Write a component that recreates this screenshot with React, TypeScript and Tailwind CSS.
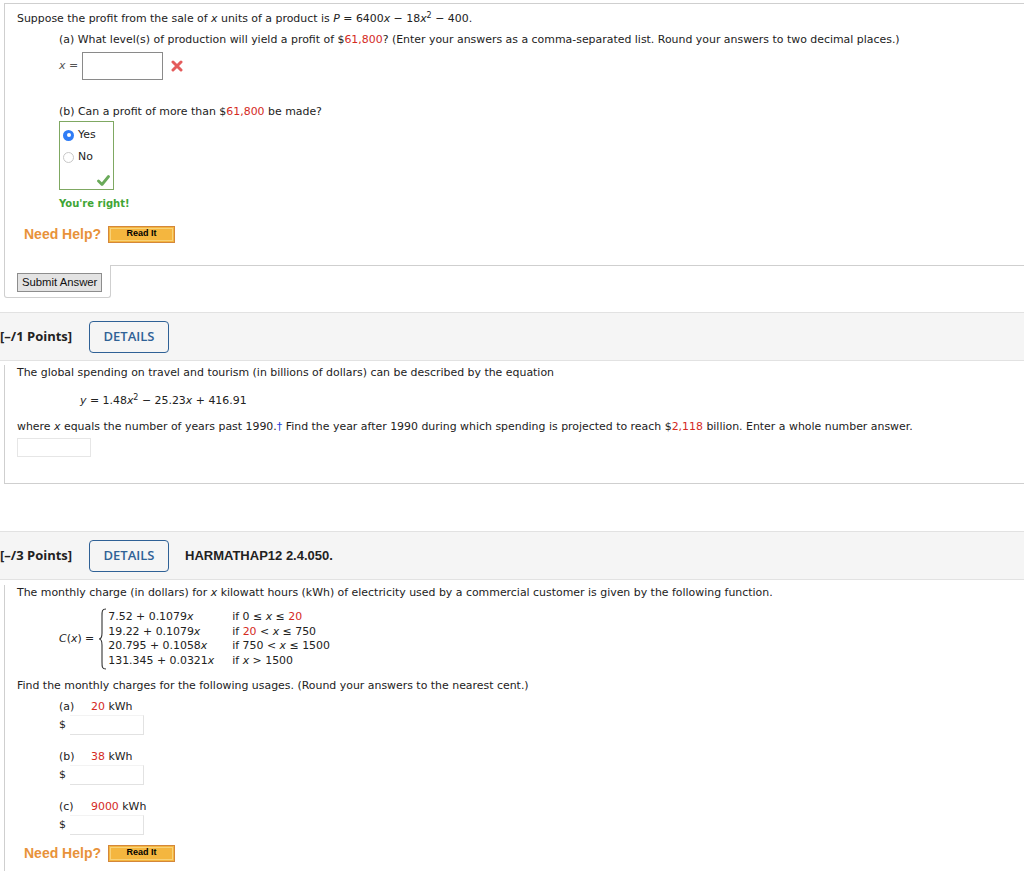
import React from "react";

const red = "text-[#d42a1e]";

function NeedHelp() {
  return (
    <div className="flex items-center h-[18px] pl-[19px]">
      <span className="text-[#e8923a] font-bold text-[14px]" style={{ fontFamily: "'Liberation Sans', Arial, sans-serif" }}>
        Need Help?
      </span>
      <span className="ml-[7px] h-[17px] w-[67px] border border-[#d4873a] bg-[#f4b63f] flex items-center justify-center p-[1px]">
        <span className="w-full h-full border border-[#f8d27a] flex items-center justify-center text-[9px] font-bold text-black" style={{ fontFamily: "'Liberation Sans', Arial, sans-serif" }}>
          Read It
        </span>
      </span>
    </div>
  );
}

function Header({ pts, title }: { pts: string; title?: string }) {
  return (
    <div className="h-[49px] bg-[#f5f5f5] border-t border-b border-[#e2e2e2] flex items-center" style={{ fontFamily: "'Open Sans', sans-serif" }}>
      <span className="text-[13px] font-bold text-[#222] w-[89px]">{pts}</span>
      <span className="h-[32px] w-[80px] border-[1.5px] border-[#2f6196] rounded-[4px] flex items-center justify-center text-[13px] font-semibold text-[#2f6196]">
        DETAILS
      </span>
      {title && (
        <span className="ml-[16px] text-[13px] font-bold text-[#222]" style={{ fontFamily: "'Liberation Sans', Arial, sans-serif" }}>{title}</span>
      )}
    </div>
  );
}

function Radio({ checked }: { checked?: boolean }) {
  return checked ? (
    <span className="w-[11px] h-[11px] rounded-full bg-[#2f7cf6] flex items-center justify-center">
      <span className="w-[4px] h-[4px] rounded-full bg-white" />
    </span>
  ) : (
    <span className="w-[11px] h-[11px] rounded-full border border-[#c8c8c8] bg-white" />
  );
}

function Brace() {
  return (
    <svg width="9" height="62" viewBox="0 0 9 62" className="mr-[1px]">
      <path d="M8 1 C4 1 4 3 4 8 L4 25 C4 29 3 31 1 31 C3 31 4 33 4 37 L4 54 C4 59 4 61 8 61" fill="none" stroke="#333" strokeWidth="1.1" />
    </svg>
  );
}

function Usage({ label, amount }: { label: string; amount: string }) {
  return (
    <div className="pl-[42px]">
      <div className="h-[16px] leading-[16px] flex">
        <span className="w-[32px]">{label}</span>
        <span><span className={red}>{amount}</span> kWh</span>
      </div>
      <div className="flex items-center h-[20px]">
        <span className="w-[11px]">$</span>
        <span className="w-[74px] h-[20px] border-b border-r border-[#e2e2e2] border-t border-t-[#f3f3f3]" />
      </div>
    </div>
  );
}

export default function App() {
  return (
    <div className="w-[1024px] h-[871px] overflow-hidden bg-white text-[10.93px] text-[#222]" style={{ fontFamily: "'DejaVu Sans', Verdana, sans-serif" }}>
      {/* Section 1 */}
      <div className="pt-[3px]">
        <div className="ml-[4px] border-t border-l border-[#cfcfcf] pl-[12px] pb-[22px]">
          <p className="mt-[7px] h-[16px] leading-[16px]">
            Suppose the profit from the sale of <i>x</i> units of a product is <i>P</i> = 6400<i>x</i> − 18<i>x</i>
            <sup className="text-[8px]">2</sup> − 400.
          </p>
          <div className="pl-[42px]">
            <p className="mt-[5px] h-[16px] leading-[16px]">
              (a) What level(s) of production will yield a profit of $<span className={red}>61,800</span>? (Enter your answers as a comma-separated list. Round your answers to two decimal places.)
            </p>
            <div className="mt-[4px] flex items-center h-[28px]">
              <span className="w-[23px] text-[#555]"><i>x</i> =</span>
              <span className="w-[81px] h-[28px] border border-[#8a8a8a]" />
              <svg width="12" height="12" viewBox="0 0 12 12" className="ml-[8px]">
                <path d="M2 2 L10 10 M10 2 L2 10" stroke="#e45c5c" strokeWidth="3" strokeLinecap="round" />
              </svg>
            </div>
            <p className="mt-[24px] h-[16px] leading-[16px]">
              (b) Can a profit of more than $<span className={red}>61,800</span> be made?
            </p>
            <div className="mt-[1px] w-[55px] h-[69px] border border-[#7fa862] relative">
              <div className="flex items-center h-[16px] mt-[5px] pl-[3px]">
                <Radio checked />
                <span className="ml-[4px]">Yes</span>
              </div>
              <div className="flex items-center h-[16px] mt-[6px] pl-[3px]">
                <Radio />
                <span className="ml-[4px]">No</span>
              </div>
              <svg width="13" height="11" viewBox="0 0 13 11" className="absolute right-[3px] bottom-[3px]">
                <path d="M1.5 6 L5 9.5 L11.5 1.5" fill="none" stroke="#6aaa5a" strokeWidth="2.8" strokeLinecap="round" strokeLinejoin="round" />
              </svg>
            </div>
            <p className="mt-[6px] h-[16px] leading-[16px] text-[10px] font-bold text-[#3fa535]">You're right!</p>
          </div>
          <div className="mt-[13px] -ml-[12px]">
            <NeedHelp />
          </div>
        </div>
        <div className="ml-[4px] flex">
          <div className="w-[107px] h-[33px] border-l border-r border-b border-[#cfcfcf] rounded-b-[3px] pl-[12px] pt-[8px]">
            <span className="inline-flex items-center h-[19px] px-[4px] bg-[#e3e3e3] border border-[#8d8d8d] text-[11.3px] text-[#111]" style={{ fontFamily: "'Liberation Sans', Arial, sans-serif" }}>
              Submit Answer
            </span>
          </div>
          <div className="flex-1 border-t border-[#cfcfcf]" />
        </div>
      </div>

      {/* Section 2 */}
      <div className="mt-[14px]">
        <Header pts="[–/1 Points]" />
        <div className="ml-[4px] border-l border-b border-[#cfcfcf] h-[119px] pl-[12px]">
          <p className="mt-[4px] h-[16px] leading-[16px]">
            The global spending on travel and tourism (in billions of dollars) can be described by the equation
          </p>
          <p className="mt-[12px] h-[16px] leading-[16px] pl-[63px]">
            <i>y</i> = 1.48<i>x</i><sup className="text-[8px]">2</sup> − 25.23<i>x</i> + 416.91
          </p>
          <p className="mt-[10px] h-[16px] leading-[16px]">
            where <i>x</i> equals the number of years past 1990.<span className="text-[#1f3fd8]">†</span> Find the year after 1990 during which spending is projected to reach $<span className={red}>2,118</span> billion. Enter a whole number answer.
          </p>
          <div className="mt-[3px] w-[74px] h-[19px] border border-[#e6e6e6]" />
        </div>
      </div>

      {/* Section 3 */}
      <div className="mt-[47px]">
        <Header pts="[–/3 Points]" title="HARMATHAP12 2.4.050." />
        <div className="ml-[4px] border-l border-[#cfcfcf] h-[300px] pl-[12px]">
          <p className="mt-[5px] h-[16px] leading-[16px]">
            The monthly charge (in dollars) for <i>x</i> kilowatt hours (kWh) of electricity used by a commercial customer is given by the following function.
          </p>
          <div className="mt-[7px] flex items-center pl-[42px]">
            <span className="mr-[4px]"><i>C</i>(<i>x</i>) =</span>
            <Brace />
            <div className="leading-[14.5px]">
              <div className="flex"><span className="w-[124px]">7.52 + 0.1079<i>x</i></span><span>if 0 ≤ <i>x</i> ≤ <span className={red}>20</span></span></div>
              <div className="flex"><span className="w-[124px]">19.22 + 0.1079<i>x</i></span><span>if <span className={red}>20</span> &lt; <i>x</i> ≤ 750</span></div>
              <div className="flex"><span className="w-[124px]">20.795 + 0.1058<i>x</i></span><span>if 750 &lt; <i>x</i> ≤ 1500</span></div>
              <div className="flex"><span className="w-[124px]">131.345 + 0.0321<i>x</i></span><span>if <i>x</i> &gt; 1500</span></div>
            </div>
          </div>
          <p className="mt-[8px] h-[16px] leading-[16px]">
            Find the monthly charges for the following usages. (Round your answers to the nearest cent.)
          </p>
          <div className="mt-[5px]">
            <Usage label="(a)" amount="20" />
          </div>
          <div className="mt-[14px]">
            <Usage label="(b)" amount="38" />
          </div>
          <div className="mt-[14px]">
            <Usage label="(c)" amount="9000" />
          </div>
          <div className="mt-[9px] -ml-[12px]">
            <NeedHelp />
          </div>
        </div>
      </div>
    </div>
  );
}
